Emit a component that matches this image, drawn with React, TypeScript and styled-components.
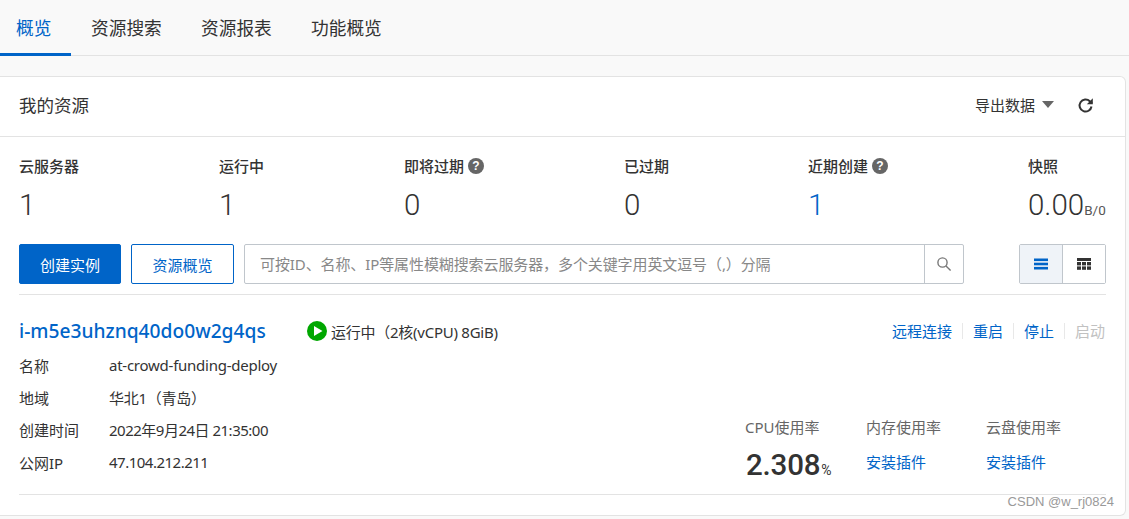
import React from "react";
import styled, { createGlobalStyle } from "styled-components";

const Global = createGlobalStyle`
  html, body { margin: 0; padding: 0; background: #f9f9f9; }
  body { font-family: "Noto Sans", "Noto Sans CJK SC", sans-serif; color: #333; }
`;
const Page = styled.div`width: 1129px; height: 519px; overflow: hidden; position: relative; background: #f9f9f9;`;
const Tabs = styled.nav`display: flex; height: 55px; border-bottom: 1px solid #e3e3e3; box-sizing: content-box;`;
const Tab = styled.div<{ $active?: boolean }>`
  box-sizing: border-box; padding: 0 20px 0 ${p => p.$active ? 16 : 20}px; font-size: 17.7px; line-height: 59px;
  color: ${p => p.$active ? "#0064c8" : "#333"};
  border-bottom: ${p => p.$active ? "3px solid #0064c8" : "0"};
  margin-bottom: -1px; height: 57px; width: ${p => p.$active ? 71 : 111}px; white-space: nowrap;
  margin-right: ${p => p.$active ? 0 : -1}px;
  margin-top: -1px;
`;
const Card = styled.section`
  margin: 20px 3px 0 0; height: 440px; box-sizing: border-box; background: #fff;
  border: 1px solid #e3e3e3; border-left: 0; border-radius: 0 6px 6px 0;
`;
const CardHead = styled.header`
  height: 60px; box-sizing: border-box; border-bottom: 1px solid #e3e3e3; display: flex; align-items: center; justify-content: space-between;
  padding: 0 30px 4px 19px; font-size: 17.5px; color: #333;
`;
const HeadTools = styled.div`display: flex; align-items: center; font-size: 15px; color: #333;`;
const Caret = styled.span`
  width: 0; height: 0; border-left: 6.5px solid transparent; border-right: 6.5px solid transparent;
  border-top: 7px solid #666; margin: 0 23px 0 7px;
`;
const Body = styled.div`padding: 0 19px 0 19px;`;
const Stats = styled.div`display: flex; padding-top: 19px; height: 88px; box-sizing: content-box;`;
const Stat = styled.div<{ $w: number }>`width: ${p => p.$w}px; flex: none;`;
const StatLabel = styled.div`display: flex; align-items: center; gap: 4px; font-size: 15px; font-weight: 500; line-height: 20px; color: #333; white-space: nowrap;`;
const Help = styled.span`
  width: 16px; height: 16px; border-radius: 50%; background: #666; color: #fff; font-size: 12px; font-weight: 700;
  display: inline-flex; align-items: center; justify-content: center; line-height: 16px; font-family: "Liberation Sans", sans-serif;
`;
const StatValue = styled.div<{ $blue?: boolean }>`
  font-family: Roboto, sans-serif; font-size: 29.5px; line-height: 36px; margin-top: 11px; color: ${p => p.$blue ? "#0064c8" : "#333"}; font-weight: 300;
  white-space: nowrap;
`;
const Unit = styled.span`font-size: 13.5px; font-weight: 400; color: #555;`;
const ToolRow = styled.div`display: flex; align-items: stretch; height: 40px; padding-bottom: 10px; border-bottom: 1px solid #e3e3e3;`;
const Btn = styled.button<{ $primary?: boolean }>`
  width: ${p => p.$primary ? 102 : 103}px; height: 40px; border-radius: 2px; font: inherit; font-size: 15px; padding: 0;
  border: 1px solid #0064c8; background: ${p => p.$primary ? "#0064c8" : "#fff"}; color: ${p => p.$primary ? "#fff" : "#0064c8"};
  margin-right: 10px;
`;
const Search = styled.div`
  width: 720px; height: 40px; box-sizing: border-box; border: 1px solid #c0c6cc; border-radius: 2px; display: flex; 
`;
const SearchText = styled.div`flex: 1; padding-left: 15px; font-size: 15px; line-height: 38px; color: #888; white-space: nowrap; overflow: hidden; letter-spacing: -0.1px;`;
const SearchBtn = styled.div`width: 38px; border-left: 1px solid #c0c6cc; display: flex; align-items: center; justify-content: center;`;
const ViewGroup = styled.div`
  margin-left: auto; width: 87px; height: 40px; box-sizing: border-box; border: 1px solid #c0c6cc; border-radius: 2px; display: flex;
`;
const ViewBtn = styled.div<{ $on?: boolean }>`
  flex: 1; display: flex; align-items: center; justify-content: center; background: ${p => p.$on ? "#eff3f8" : "#fff"};
  & + & { border-left: 1px solid #c0c6cc; }
`;
const Instance = styled.article`height: 199px; border-bottom: 1px solid #e3e3e3; display: flex; flex-direction: column; position: relative;`;
const TitleRow = styled.div`display: flex; align-items: center; height: 36px; margin-top: 18px;`;
const InstanceId = styled.a`font-size: 19.2px; color: #0064c8; font-weight: 500; width: 288px; line-height: 36px; white-space: nowrap;`;
const StateIcon = styled.span`width: 20px; height: 20px; margin-right: 4px; display: flex;`;
const StateText = styled.span`font-size: 15px; color: #333; white-space: nowrap; letter-spacing: -0.25px;`;
const Actions = styled.div`margin-left: auto; display: flex; align-items: center; font-size: 15px; padding-right: 1px;`;
const Action = styled.a<{ $off?: boolean }>`
  color: ${p => p.$off ? "#c1c1c1" : "#0064c8"}; padding: 0 10px; line-height: 16px;
  &:not(:last-child) { border-right: 1px solid #e8e8e8; }
  &:last-child { padding-right: 0; }
  &:first-child { padding-left: 0; }
`;
const Info = styled.dl`margin: 0; display: grid; grid-template-columns: 90px 1fr; grid-auto-rows: 32.3px; font-size: 15px; align-items: center;`;
const Key = styled.dt`color: #333;`;
const Val = styled.dd<{ $tight?: boolean }>`margin: 0; color: #333; letter-spacing: ${p => p.$tight ? -0.5 : -0.25}px;`;
const Metrics = styled.div`position: absolute; right: 0; top: 122px; width: 361px; display: grid; grid-template-columns: 121px 120px 120px;`;
const MetricLabel = styled.div`font-size: 15px; color: #666; line-height: 20px; white-space: nowrap;`;
const BigValue = styled.div`font-family: Roboto, sans-serif; font-size: 29.5px; font-weight: 500; line-height: 36px; margin-top: 10px; color: #333; padding-left: 1px; letter-spacing: -0.2px;`;
const Pct = styled.span`font-size: 14px; font-weight: 400; margin-left: 1px;`;
const Plugin = styled.a`display: block; font-size: 15px; color: #0064c8; line-height: 20px; margin-top: 15px;`;
const Watermark = styled.div`position: absolute; right: 15px; top: 495px; font-family: "Liberation Sans", sans-serif; font-size: 13px; color: #999; line-height: 14px;`;

export default function App() {
  return (
    <Page>
      <Global />
      <Tabs>
        <Tab $active>概览</Tab>
        <Tab>资源搜索</Tab>
        <Tab>资源报表</Tab>
        <Tab>功能概览</Tab>
      </Tabs>
      <Card>
        <CardHead>
          <span>我的资源</span>
          <HeadTools>
            导出数据<Caret />
            <svg width="18" height="18" viewBox="0 0 18 18" fill="none">
              <path d="M14.5 10.5a6 6 0 1 1-1.7-5.2L15 7.3" stroke="#333" strokeWidth="2" />
              <path d="M15.8 2.2v6h-6z" fill="#333" />
            </svg>
          </HeadTools>
        </CardHead>
        <Body>
          <Stats>
            <Stat $w={200}><StatLabel>云服务器</StatLabel><StatValue>1</StatValue></Stat>
            <Stat $w={185}><StatLabel>运行中</StatLabel><StatValue>1</StatValue></Stat>
            <Stat $w={220}><StatLabel>即将过期 <Help>?</Help></StatLabel><StatValue>0</StatValue></Stat>
            <Stat $w={184}><StatLabel>已过期</StatLabel><StatValue>0</StatValue></Stat>
            <Stat $w={220}><StatLabel>近期创建 <Help>?</Help></StatLabel><StatValue $blue>1</StatValue></Stat>
            <Stat $w={78}><StatLabel>快照</StatLabel><StatValue>0.00<Unit>B/0</Unit></StatValue></Stat>
          </Stats>
          <ToolRow>
            <Btn $primary>创建实例</Btn>
            <Btn>资源概览</Btn>
            <Search>
              <SearchText>可按ID、名称、IP等属性模糊搜索云服务器，多个关键字用英文逗号（,）分隔</SearchText>
              <SearchBtn>
                <svg width="16" height="16" viewBox="0 0 16 16" fill="none" stroke="#777" strokeWidth="1.4">
                  <circle cx="6.5" cy="6.5" r="4.6" /><path d="M10 10l4.6 4.6" />
                </svg>
              </SearchBtn>
            </Search>
            <ViewGroup>
              <ViewBtn $on>
                <svg width="14" height="12" viewBox="0 0 14 12" fill="#0064c8">
                  <rect y="0.5" width="14" height="2.6" /><rect y="4.7" width="14" height="2.6" /><rect y="8.9" width="14" height="2.6" />
                </svg>
              </ViewBtn>
              <ViewBtn>
                <svg width="14" height="12" viewBox="0 0 14 12" fill="#333">
                  <rect width="14" height="3" /><rect y="4" width="4" height="3.4" /><rect x="5" y="4" width="4" height="3.4" /><rect x="10" y="4" width="4" height="3.4" />
                  <rect y="8.4" width="4" height="3.4" /><rect x="5" y="8.4" width="4" height="3.4" /><rect x="10" y="8.4" width="4" height="3.4" />
                </svg>
              </ViewBtn>
            </ViewGroup>
          </ToolRow>
          <Instance>
            <TitleRow>
              <InstanceId>i-m5e3uhznq40do0w2g4qs</InstanceId>
              <StateIcon>
                <svg width="20" height="20" viewBox="0 0 20 20">
                  <circle cx="10" cy="10" r="10" fill="#00a700" /><path d="M7 5l8.5 5-8.5 5z" fill="#fff" />
                </svg>
              </StateIcon>
              <StateText>运行中（2核(vCPU) 8GiB)</StateText>
              <Actions>
                <Action>远程连接</Action>
                <Action>重启</Action>
                <Action>停止</Action>
                <Action $off>启动</Action>
              </Actions>
            </TitleRow>
            <Info>
              <Key>名称</Key><Val>at-crowd-funding-deploy</Val>
              <Key>地域</Key><Val>华北1（青岛）</Val>
              <Key>创建时间</Key><Val $tight>2022年9月24日 21:35:00</Val>
              <Key>公网IP</Key><Val $tight>47.104.212.211</Val>
            </Info>
            <Metrics>
              <MetricLabel>CPU使用率</MetricLabel>
              <MetricLabel>内存使用率</MetricLabel>
              <MetricLabel>云盘使用率</MetricLabel>
              <BigValue>2.308<Pct>%</Pct></BigValue>
              <Plugin>安装插件</Plugin>
              <Plugin>安装插件</Plugin>
            </Metrics>
          </Instance>
        </Body>
      </Card>
      <Watermark>CSDN @w_rj0824</Watermark>
    </Page>
  );
}
